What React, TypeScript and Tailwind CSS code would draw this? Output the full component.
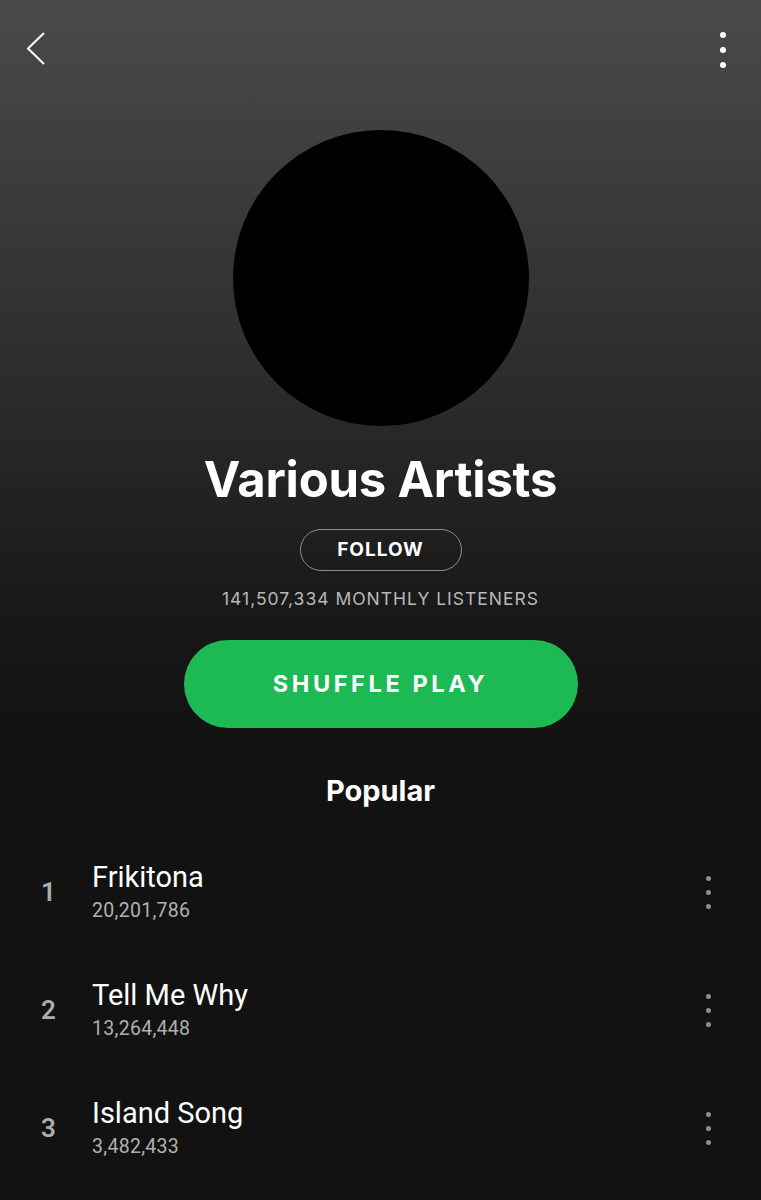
import React from 'react';

export default function App() {
  const tracks = [
    { n: 1, title: 'Frikitona', plays: '20,201,786' },
    { n: 2, title: 'Tell Me Why', plays: '13,264,448' },
    { n: 3, title: 'Island Song', plays: '3,482,433' },
  ];

  return (
    <div
      className="w-[761px] h-[1200px] overflow-hidden text-white bg-[linear-gradient(180deg,#4a4a4a_0px,#2c2c2c_380px,#161616_640px,#121212_760px)]"
      style={{ fontFamily: 'Inter, "Open Sans", sans-serif' }}
    >
      {/* top bar */}
      <div className="flex items-start justify-between px-[16px] pt-[31px] h-[130px]">
        <svg width="32" height="36" viewBox="0 0 32 36" fill="none">
          <path d="M28 2 L12 17.5 L28 33" stroke="#fff" strokeWidth="2" />
        </svg>
        <div className="flex flex-col items-center gap-[9px] mr-[19px] mt-[1px]">
          <span className="w-[6px] h-[6px] rounded-full bg-white" />
          <span className="w-[6px] h-[6px] rounded-full bg-white" />
          <span className="w-[6px] h-[6px] rounded-full bg-white" />
        </div>
      </div>

      {/* artist header */}
      <div className="flex flex-col items-center">
        <div className="w-[296px] h-[296px] rounded-full bg-black" />
        <h1 className="mt-[26px] text-[49px] leading-[56px] font-bold tracking-[-0.2px]">Various Artists</h1>
        <button className="mt-[21px] w-[162px] h-[42px] rounded-full border-[1.5px] border-[#8c8c8c] text-[19px] font-bold tracking-[1px]">
          FOLLOW
        </button>
        <div className="mt-[18px] text-[17.5px] leading-[20px] tracking-[1px] text-[#b8b8b8]">
          141,507,334 MONTHLY LISTENERS
        </div>
        <button className="mt-[31px] w-[394px] h-[88px] rounded-full bg-[#1db954] text-[23.5px] font-bold tracking-[3.6px]">
          SHUFFLE PLAY
        </button>
        <h2 className="mt-[45px] text-[29px] leading-[36px] font-bold">Popular</h2>
      </div>

      {/* track list */}
      <div className="mt-[24px] flex flex-col" style={{ fontFamily: 'Roboto, sans-serif' }}>
        {tracks.map((t) => (
          <div key={t.n} className="flex items-center h-[118px] pl-[41px] pr-[50px]">
            <span className="w-[51px] text-[26px] font-semibold text-[#adadad]">{t.n}</span>
            <div className="flex flex-col flex-1 -mt-[3px]">
              <span className="text-[29px] leading-[34px] text-white">{t.title}</span>
              <span className="mt-[6px] text-[19.5px] leading-[22px] tracking-[0.3px] text-[#b0b0b0]">{t.plays}</span>
            </div>
            <div className="flex flex-col items-center gap-[9px]">
              <span className="w-[5px] h-[5px] rounded-full bg-[#8f8f8f]" />
              <span className="w-[5px] h-[5px] rounded-full bg-[#8f8f8f]" />
              <span className="w-[5px] h-[5px] rounded-full bg-[#8f8f8f]" />
            </div>
          </div>
        ))}
      </div>
    </div>
  );
}
